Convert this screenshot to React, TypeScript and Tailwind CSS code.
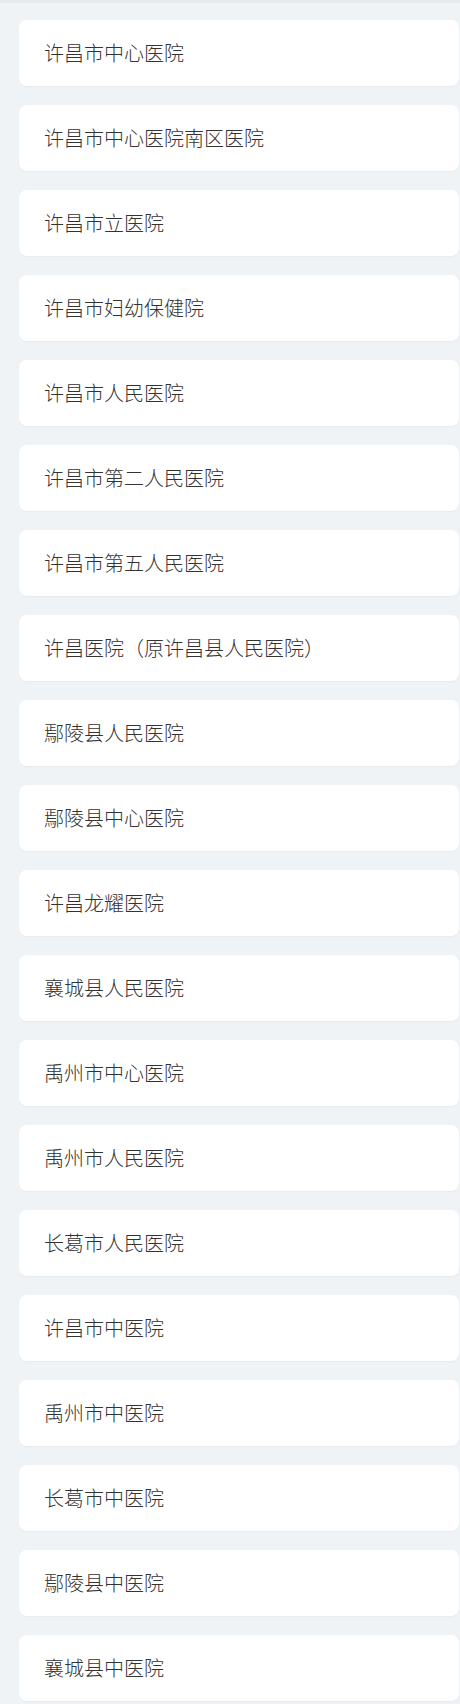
const HOSPITALS = [
  '许昌市中心医院',
  '许昌市中心医院南区医院',
  '许昌市立医院',
  '许昌市妇幼保健院',
  '许昌市人民医院',
  '许昌市第二人民医院',
  '许昌市第五人民医院',
  '许昌医院（原许昌县人民医院）',
  '鄢陵县人民医院',
  '鄢陵县中心医院',
  '许昌龙耀医院',
  '襄城县人民医院',
  '禹州市中心医院',
  '禹州市人民医院',
  '长葛市人民医院',
  '许昌市中医院',
  '禹州市中医院',
  '长葛市中医院',
  '鄢陵县中医院',
  '襄城县中医院',
];

export default function App() {
  return (
    <div className="min-h-[1704px] w-[460px] bg-[#eff3f6] border-t-[3px] border-[#e6eaee] pt-[17px] pl-[19px] pr-[1px] font-['Noto_Sans_CJK_SC','Noto_Sans',sans-serif]">
      <div className="flex flex-col gap-[19px]">
        {HOSPITALS.map((name) => (
          <div
            key={name}
            className="h-[66px] flex items-center pl-[25px] bg-white rounded-lg shadow-[0_1px_2px_rgba(0,0,0,0.04)] text-[20px] font-light text-[#333333]"
          >
            {name}
          </div>
        ))}
      </div>
    </div>
  );
}
